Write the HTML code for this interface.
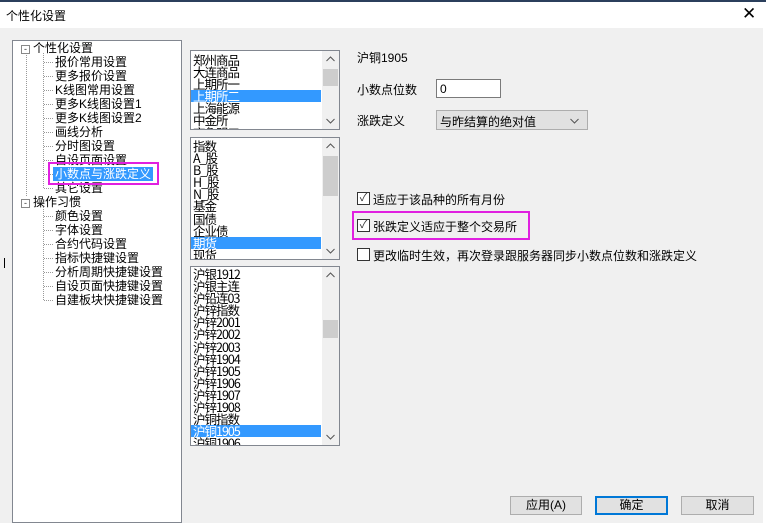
<!DOCTYPE html><html><head><meta charset="utf-8"><style>
*{margin:0;padding:0;box-sizing:border-box}
body{width:766px;height:523px;background:#f0f0f0;font-family:"Liberation Sans","Noto Sans CJK SC",sans-serif;font-size:12px;color:#000;position:relative;overflow:hidden}
.abs{position:absolute}
.title{left:0;top:0;width:766px;height:28px;background:#fff;border-top:2px solid #2b3f5c}
.box{background:#fff;border:1px solid #828790}
.list div.r{height:12.1px;line-height:12.1px;padding-left:2px;white-space:nowrap;letter-spacing:-1px;font-family:"WenQuanYi Zen Hei","Noto Sans CJK SC",sans-serif;font-size:12.5px}
.sel{background:#3399ff;color:#fff}
.sb{right:0;top:0;width:17px;height:100%;background:#f0f0f0}
.thumb{left:1px;width:15px;background:#cdcdcd}
.ar{left:4px}
.tree div{position:absolute;height:14px;line-height:14px;white-space:nowrap;font-size:12px}
.cb{width:13px;height:13px;border:1px solid #333;background:#fff;font-size:11px;line-height:11px;text-align:center;color:#333}
.btn{height:19px;background:#e1e1e1;border:1px solid #adadad;text-align:center;line-height:17px;font-size:12px}
.pm{display:inline-block;width:9px;height:9px;border:1px solid #888;font-size:9px;line-height:7px;text-align:center;color:#333;vertical-align:0px;margin-right:3px}
</style></head><body>
<div class="abs title"><span class="abs" style="left:6px;top:5px;font-size:12px">个性化设置</span><span class="abs" style="left:742px;top:2px;font-size:17px">✕</span></div>
<div class="abs" style="left:763px;top:28px;width:3px;height:495px;background:#fff"></div>
<div class="abs" style="left:4px;top:258px;width:1px;height:10px;background:#000"></div>
<div class="abs box tree" style="left:12px;top:40px;width:170px;height:483px">
<svg class="abs" style="left:0;top:0" width="60" height="270"><g stroke="#999" stroke-dasharray="1 1"><line x1="13.5" y1="12" x2="13.5" y2="156"/><line x1="30.5" y1="12" x2="30.5" y2="147"/><line x1="30.5" y1="166" x2="30.5" y2="260"/>
<g id="t"><line x1="31" y1="21.5" x2="40" y2="21.5"/><line x1="31" y1="35.5" x2="40" y2="35.5"/><line x1="31" y1="49.5" x2="40" y2="49.5"/><line x1="31" y1="63.5" x2="40" y2="63.5"/><line x1="31" y1="77.5" x2="40" y2="77.5"/><line x1="31" y1="91.5" x2="40" y2="91.5"/><line x1="31" y1="105.5" x2="40" y2="105.5"/><line x1="31" y1="119.5" x2="40" y2="119.5"/><line x1="31" y1="133.5" x2="40" y2="133.5"/><line x1="31" y1="147.5" x2="40" y2="147.5"/></g>
<line x1="31" y1="175.5" x2="40" y2="175.5"/><line x1="31" y1="189.5" x2="40" y2="189.5"/><line x1="31" y1="203.5" x2="40" y2="203.5"/><line x1="31" y1="217.5" x2="40" y2="217.5"/><line x1="31" y1="231.5" x2="40" y2="231.5"/><line x1="31" y1="245.5" x2="40" y2="245.5"/><line x1="31" y1="259.5" x2="40" y2="259.5"/></g></svg>
<div style="left:8px;top:0px"><span class="pm">-</span>个性化设置</div>
<div style="left:42px;top:14px">报价常用设置</div><div style="left:42px;top:28px">更多报价设置</div><div style="left:42px;top:42px">K线图常用设置</div><div style="left:42px;top:56px">更多K线图设置1</div><div style="left:42px;top:70px">更多K线图设置2</div><div style="left:42px;top:84px">画线分析</div><div style="left:42px;top:98px">分时图设置</div><div style="left:42px;top:112px">自设页面设置</div>
<div style="left:40px;top:126px;background:#3399ff;color:#fff;padding:0 2px">小数点与涨跌定义</div>
<div style="left:42px;top:140px">其它设置</div>
<div style="left:8px;top:154px"><span class="pm">-</span>操作习惯</div>
<div style="left:42px;top:168px">颜色设置</div><div style="left:42px;top:182px">字体设置</div><div style="left:42px;top:196px">合约代码设置</div><div style="left:42px;top:210px">指标快捷键设置</div><div style="left:42px;top:224px">分析周期快捷键设置</div><div style="left:42px;top:238px">自设页面快捷键设置</div><div style="left:42px;top:252px">自建板块快捷键设置</div>
</div>
<div class="abs" style="left:48px;top:162px;width:111px;height:23px;border:2px solid #e020e0"></div>
<div class="abs box list" style="left:190px;top:50px;width:150px;height:80px;overflow:hidden;padding-top:3px">
<div class="r">郑州商品</div><div class="r">大连商品</div><div class="r">上期所一</div><div class="r sel" style="width:130px">上期所二</div><div class="r">上海能源</div><div class="r">中金所</div><div class="r">齐鲁盟口</div>
<div class="abs sb"><svg class="abs ar" style="top:5px" width="9" height="6"><path d="M0.5 5L4.5 1L8.5 5" stroke="#555" fill="none"/></svg><div class="abs thumb" style="top:18px;height:17px"></div><svg class="abs ar" style="bottom:5px" width="9" height="6"><path d="M0.5 1L4.5 5L8.5 1" stroke="#555" fill="none"/></svg></div></div>
<div class="abs box list" style="left:190px;top:137px;width:150px;height:123px;overflow:hidden;padding-top:2px">
<div class="r">指数</div><div class="r">A_股</div><div class="r">B_股</div><div class="r">H_股</div><div class="r">N_股</div><div class="r">基金</div><div class="r">国债</div><div class="r">企业债</div><div class="r sel" style="width:130px">期货</div><div class="r">现货</div>
<div class="abs sb"><svg class="abs ar" style="top:5px" width="9" height="6"><path d="M0.5 5L4.5 1L8.5 5" stroke="#555" fill="none"/></svg><div class="abs thumb" style="top:18px;height:40px"></div><svg class="abs ar" style="bottom:5px" width="9" height="6"><path d="M0.5 1L4.5 5L8.5 1" stroke="#555" fill="none"/></svg></div></div>
<div class="abs box list" style="left:190px;top:266px;width:150px;height:180px;overflow:hidden;padding-top:1px">
<div class="r">沪银1912</div><div class="r">沪银主连</div><div class="r">沪铅连03</div><div class="r">沪锌指数</div><div class="r">沪锌2001</div><div class="r">沪锌2002</div><div class="r">沪锌2003</div><div class="r">沪锌1904</div><div class="r">沪锌1905</div><div class="r">沪锌1906</div><div class="r">沪锌1907</div><div class="r">沪锌1908</div><div class="r">沪铜指数</div><div class="r sel" style="width:130px">沪铜1905</div><div class="r">沪铜1906</div>
<div class="abs sb"><svg class="abs ar" style="top:5px" width="9" height="6"><path d="M0.5 5L4.5 1L8.5 5" stroke="#555" fill="none"/></svg><div class="abs thumb" style="top:53px;height:18px"></div><svg class="abs ar" style="bottom:5px" width="9" height="6"><path d="M0.5 1L4.5 5L8.5 1" stroke="#555" fill="none"/></svg></div></div>
<div class="abs" style="left:357px;top:49px">沪铜1905</div>
<div class="abs" style="left:357px;top:81px">小数点位数</div>
<div class="abs" style="left:436px;top:79px;width:65px;height:19px;background:#fff;border:1px solid #7a7a7a;padding:2px 3px">0</div>
<div class="abs" style="left:357px;top:112px">涨跌定义</div>
<div class="abs" style="left:436px;top:110px;width:152px;height:20px;background:#e1e1e1;border:1px solid #adadad;padding:2px 3px">与昨结算的绝对值<svg class="abs" style="right:8px;top:7px" width="9" height="6"><path d="M0.5 1L4.5 5L8.5 1" stroke="#555" fill="none"/></svg></div>
<div class="abs cb" style="left:357px;top:192px">✓</div><div class="abs" style="left:373px;top:191px">适应于该品种的所有月份</div>
<div class="abs" style="left:352px;top:211px;width:178px;height:29px;border:2px solid #e020e0"></div>
<div class="abs cb" style="left:357px;top:219px">✓</div><div class="abs" style="left:373px;top:218px">张跌定义适应于整个交易所</div>
<div class="abs cb" style="left:357px;top:248px"></div><div class="abs" style="left:373px;top:247px">更改临时生效，再次登录跟服务器同步小数点位数和涨跌定义</div>
<div class="abs btn" style="left:510px;top:496px;width:72px">应用(A)</div>
<div class="abs btn" style="left:595px;top:496px;width:73px;border:2px solid #0078d7;line-height:15px">确定</div>
<div class="abs btn" style="left:681px;top:496px;width:73px">取消</div>
</body></html>
